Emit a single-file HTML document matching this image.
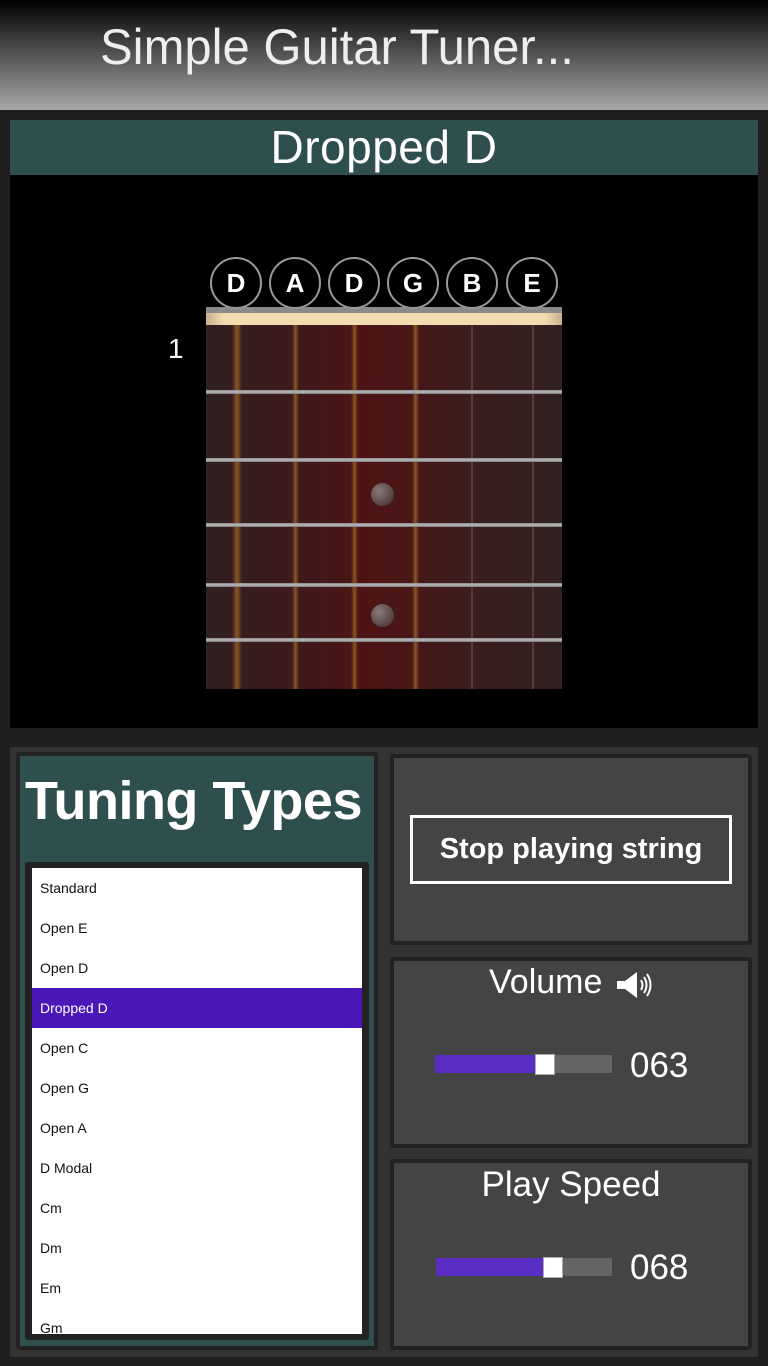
<!DOCTYPE html>
<html><head><style>
body{margin:0;width:768px;height:1366px;background:#1e1e1e;position:relative;overflow:hidden;font-family:"Segoe UI","Liberation Sans",sans-serif;color:#fff}
.abs{position:absolute}
#hdr{left:0;top:0;width:768px;height:110px;background:linear-gradient(#000,#a8a8a8)}
#title{left:100px;top:18px;font-size:50px;font-weight:300;color:#eee;letter-spacing:0px;white-space:nowrap;transform:scaleX(0.98);transform-origin:left}
.str{position:absolute;top:325px;height:364px;width:5px;background:linear-gradient(90deg,transparent,rgba(160,100,40,.8),transparent)}
.fret{position:absolute;left:206px;width:356px;height:4px;background:linear-gradient(#888,#bbb,#777)}
.circ{position:absolute;top:257px;width:48px;height:48px;border:2px solid #999;border-radius:50%;text-align:center;line-height:48px;font-size:26px;font-weight:bold;background:#000}
.dot{position:absolute;width:23px;height:23px;border-radius:50%;background:radial-gradient(circle at 35% 35%,#8a7a7a,#3a2a2a)}
.panel{position:absolute;background:#444;border:4px solid #222;border-radius:3px;box-sizing:border-box}
.li{height:40px;line-height:40px;padding-left:8px;font-size:14px;color:#111}
.track{position:absolute;height:18px;background:#646464}
</style></head><body>
<div id="hdr" class="abs"></div>
<div id="title" class="abs">Simple Guitar Tuner...</div>
<div class="abs" style="left:10px;top:120px;width:748px;height:55px;background:#2f4f4f;text-align:center;font-size:46px;line-height:54px;letter-spacing:0.5px">Dropped D</div>
<div class="abs" style="left:10px;top:175px;width:748px;height:553px;background:#000"></div>
<div class="abs" style="left:168px;top:333px;font-size:28px">1</div>
<div class="abs" style="left:206px;top:307px;width:356px;height:6px;background:#8a8a8a"></div>
<div class="abs" style="left:206px;top:313px;width:356px;height:12px;background:linear-gradient(90deg,#c8b090,#f3dcb0 5%,#f3dcb0 95%,#c8b090)"></div>
<div class="abs" style="left:206px;top:325px;width:356px;height:364px;background:linear-gradient(90deg,#302020,#3e1a1c 25%,#4e1414 45%,#4a1616 55%,#3a1e1e 75%,#322020)"></div>
<div class="str" style="left:232px;width:10px"></div>
<div class="str" style="left:292px;width:7px"></div>
<div class="str" style="left:351px;width:7px"></div>
<div class="str" style="left:412px;width:7px"></div>
<div class="str" style="left:471px;background:rgba(120,90,80,.5);width:2px"></div>
<div class="str" style="left:532px;background:rgba(120,90,80,.5);width:2px"></div>
<div class="fret" style="top:390px"></div>
<div class="fret" style="top:458px"></div>
<div class="fret" style="top:523px"></div>
<div class="fret" style="top:583px"></div>
<div class="fret" style="top:638px"></div>
<div class="dot" style="left:371px;top:483px"></div>
<div class="dot" style="left:371px;top:604px"></div>
<div class="circ" style="left:210px">D</div>
<div class="circ" style="left:269px">A</div>
<div class="circ" style="left:328px">D</div>
<div class="circ" style="left:387px">G</div>
<div class="circ" style="left:446px">B</div>
<div class="circ" style="left:506px">E</div>

<div class="abs" style="left:10px;top:747px;width:748px;height:610px;background:#333"></div>
<div class="abs" style="left:16px;top:752px;width:362px;height:598px;background:#222;border-radius:3px"></div>
<div class="abs" style="left:20px;top:756px;width:354px;height:590px;background:#2f4f4f"></div>
<div class="abs" style="left:25px;top:770px;font-size:54px;font-weight:bold;letter-spacing:-0.5px;white-space:nowrap">Tuning Types</div>
<div class="abs" style="left:25px;top:862px;width:344px;height:478px;background:#222;border-radius:3px"></div>
<div class="abs" style="left:32px;top:868px;width:330px;height:466px;background:#fff;overflow:hidden">
<div class="li">Standard</div><div class="li">Open E</div><div class="li">Open D</div>
<div class="li" style="background:#4a17b8;color:#fff">Dropped D</div>
<div class="li">Open C</div><div class="li">Open G</div><div class="li">Open A</div><div class="li">D Modal</div>
<div class="li">Cm</div><div class="li">Dm</div><div class="li">Em</div><div class="li">Gm</div></div>

<div class="panel" style="left:390px;top:754px;width:362px;height:191px"></div>
<div class="abs" style="left:410px;top:815px;width:316px;height:63px;border:3px solid #fff;text-align:center;line-height:63px;font-size:29px;font-weight:bold">Stop playing string</div>
<div class="panel" style="left:390px;top:957px;width:362px;height:191px"></div>
<div class="abs" style="left:489px;top:963px;font-size:34px;white-space:nowrap">Volume</div>
<svg class="abs" style="left:615px;top:970px" width="38" height="30" viewBox="0 0 38 30"><path d="M2 11h8l12-9v26l-12-9H2z" fill="#fff"/><path d="M26 10q3 5 0 10M29 7q5 8 0 16M32 4q7 11 0 22" stroke="#fff" stroke-width="2" fill="none"/></svg>
<div class="track" style="left:435px;top:1055px;width:177px"></div>
<div class="track" style="left:435px;top:1055px;width:120px;background:#5a2dc4"></div>
<div class="track" style="left:535px;top:1054px;width:18px;height:19px;background:#fff;border:1px solid #aaa"></div>
<div class="abs" style="left:630px;top:1046px;font-size:35px">063</div>
<div class="panel" style="left:390px;top:1159px;width:362px;height:191px"></div>
<div class="abs" style="left:390px;top:1165px;width:362px;text-align:center;font-size:35px">Play Speed</div>
<div class="track" style="left:436px;top:1258px;width:176px"></div>
<div class="track" style="left:436px;top:1258px;width:120px;background:#5a2dc4"></div>
<div class="track" style="left:543px;top:1257px;width:18px;height:19px;background:#fff;border:1px solid #aaa"></div>
<div class="abs" style="left:630px;top:1248px;font-size:35px">068</div>
</body></html>
